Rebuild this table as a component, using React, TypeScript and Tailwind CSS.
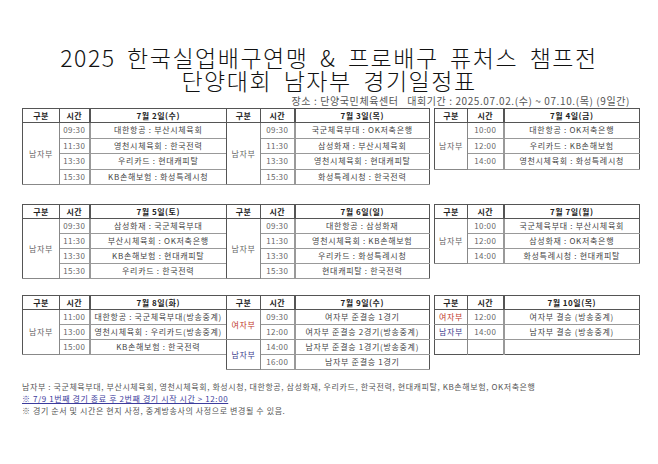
type Row = { time: string; match: string }
type Group = { label: string; tone?: "red" | "blue"; rows: Row[] }
type Day = { date: string; groups: Group[]; blank?: number }

const COLS_A = [37, 30, 137]
const COLS_B = [34, 34, 135]
const COLS_C = [33, 36, 136]

const days: Day[][] = [
  [
    {
      date: "7월 2일(수)",
      groups: [
        {
          label: "남자부",
          rows: [
            { time: "09:30", match: "대한항공 : 부산시체육회" },
            { time: "11:30", match: "영천시체육회 : 한국전력" },
            { time: "13:30", match: "우리카드 : 현대캐피탈" },
            { time: "15:30", match: "KB손해보험 : 화성특례시청" },
          ],
        },
      ],
    },
    {
      date: "7월 3일(목)",
      groups: [
        {
          label: "남자부",
          rows: [
            { time: "09:30", match: "국군체육부대 : OK저축은행" },
            { time: "11:30", match: "삼성화재 : 부산시체육회" },
            { time: "13:30", match: "영천시체육회 : 현대캐피탈" },
            { time: "15:30", match: "화성특례시청 : 한국전력" },
          ],
        },
      ],
    },
    {
      date: "7월 4일(금)",
      groups: [
        {
          label: "남자부",
          rows: [
            { time: "10:00", match: "대한항공 : OK저축은행" },
            { time: "12:00", match: "우리카드 : KB손해보험" },
            { time: "14:00", match: "영천시체육회 : 화성특례시청" },
          ],
        },
      ],
    },
  ],
  [
    {
      date: "7월 5일(토)",
      groups: [
        {
          label: "남자부",
          rows: [
            { time: "09:30", match: "삼성화재 : 국군체육부대" },
            { time: "11:30", match: "부산시체육회 : OK저축은행" },
            { time: "13:30", match: "KB손해보험 : 현대캐피탈" },
            { time: "15:30", match: "우리카드 : 한국전력" },
          ],
        },
      ],
    },
    {
      date: "7월 6일(일)",
      groups: [
        {
          label: "남자부",
          rows: [
            { time: "09:30", match: "대한항공 : 삼성화재" },
            { time: "11:30", match: "영천시체육회 : KB손해보험" },
            { time: "13:30", match: "우리카드 : 화성특례시청" },
            { time: "15:30", match: "현대캐피탈 : 한국전력" },
          ],
        },
      ],
    },
    {
      date: "7월 7일(월)",
      groups: [
        {
          label: "남자부",
          rows: [
            { time: "10:00", match: "국군체육부대 : 부산시체육회" },
            { time: "12:00", match: "삼성화재 : OK저축은행" },
            { time: "14:00", match: "화성특례시청 : 현대캐피탈" },
          ],
        },
      ],
    },
  ],
  [
    {
      date: "7월 8일(화)",
      groups: [
        {
          label: "남자부",
          rows: [
            { time: "11:00", match: "대한항공 : 국군체육부대(방송중계)" },
            { time: "13:00", match: "영천시체육회 : 우리카드(방송중계)" },
            { time: "15:00", match: "KB손해보험 : 한국전력" },
          ],
        },
      ],
    },
    {
      date: "7월 9일(수)",
      groups: [
        {
          label: "여자부",
          tone: "red",
          rows: [
            { time: "09:30", match: "여자부 준결승 1경기" },
            { time: "12:00", match: "여자부 준결승 2경기(방송중계)" },
          ],
        },
        {
          label: "남자부",
          tone: "blue",
          rows: [
            { time: "14:00", match: "남자부 준결승 1경기(방송중계)" },
            { time: "16:00", match: "남자부 준결승 1경기" },
          ],
        },
      ],
    },
    {
      date: "7월 10일(목)",
      groups: [
        { label: "여자부", tone: "red", rows: [{ time: "12:00", match: "여자부 결승 (방송중계)" }] },
        { label: "남자부", tone: "blue", rows: [{ time: "14:00", match: "남자부 결승 (방송중계)" }] },
      ],
      blank: 1,
    },
  ],
]

const toneClass = (tone?: "red" | "blue") =>
  tone === "red" ? "text-[#c0392b]" : tone === "blue" ? "text-[#3c3c8c]" : "text-[#666]"

function DayTable({
  day,
  cols,
  rowH,
  className = "",
}: {
  day: Day
  cols: number[]
  rowH: string
  className?: string
}) {
  return (
    <table className={`table-fixed border-collapse border border-[#555] ${className}`}>
      <colgroup>
        {cols.map((w, i) => (
          <col key={i} style={{ width: w }} />
        ))}
      </colgroup>
      <thead>
        <tr className="h-[14px] text-[8px] text-[#222]">
          <th className="border-r border-b border-[#555] font-bold leading-none tracking-[0.5px]">구분</th>
          <th className="border-r-2 border-b border-[#555] font-bold leading-none tracking-[0.5px]">시간</th>
          <th className="border-b border-[#555] font-bold leading-none tracking-[0.5px]">{day.date}</th>
        </tr>
      </thead>
      <tbody>
        {day.groups.map((g) =>
          g.rows.map((r, i) => (
            <tr key={g.label + r.time} className={`${rowH} text-[8px] leading-none`}>
              {i === 0 && (
                <td
                  rowSpan={g.rows.length}
                  className={`border-r border-b border-[#888] text-center tracking-[0.6px] ${toneClass(g.tone)}`}
                >
                  {g.label}
                </td>
              )}
              <td className="border-r-2 border-b border-[#999] text-center text-[#666] tracking-[0.4px]">{r.time}</td>
              <td className="border-b border-[#999] text-center text-[#444] tracking-[0.7px]">{r.match}</td>
            </tr>
          ))
        )}
        {Array.from({ length: day.blank ?? 0 }).map((_, i) => (
          <tr key={"b" + i} className={rowH}>
            <td className="border-r border-[#888]" />
            <td className="border-r-2 border-[#999]" />
            <td />
          </tr>
        ))}
      </tbody>
    </table>
  )
}

export default function App() {
  return (
    <div className="w-[658px] h-[464px] bg-white font-['Noto_Sans_CJK_KR',sans-serif] text-[#222] overflow-hidden">
      <div className="pt-[46px] text-center text-[23px] leading-[23px] font-light tracking-[1.5px] [word-spacing:5px] text-[#111]">
        <div>2025 한국실업배구연맹 &amp; 프로배구 퓨처스 챔프전</div>
        <div>단양대회 남자부 경기일정표</div>
      </div>
      <div className="mt-[3px] pr-[28px] text-right text-[10px] leading-[11px] tracking-[0.6px] text-[#555] whitespace-pre">
        장소 : 단양국민체육센터   대회기간 : 2025.07.02.(수) ~ 07.10.(목) (9일간)
      </div>

      <div className="mt-[2px] pl-[22px] flex flex-col">
        {days.map((row, ri) => {
          const rowH = ri === 0 ? "h-[15.5px]" : "h-[15px]"
          return (
            <div key={ri} className={`flex items-start ${ri === 1 ? "mt-[19px]" : ri === 2 ? "mt-[16px]" : ""}`}>
              <DayTable day={row[0]} cols={COLS_A} rowH={rowH} />
              <DayTable day={row[1]} cols={COLS_B} rowH={rowH} className="-ml-px" />
              <DayTable day={row[2]} cols={COLS_C} rowH={rowH} className="ml-[4px]" />
            </div>
          )
        })}
      </div>

      <div className="mt-[11px] pl-[22px] text-[8px] leading-[12px] text-[#555] tracking-[0.6px]">
        <div>
          남자부 : 국군체육부대, 부산시체육회, 영천시체육회, 화성시청, 대한항공, 삼성화재, 우리카드, 한국전력,
          현대캐피탈, KB손해보험, OK저축은행
        </div>
        <div className="text-[#3c3c9c] underline">※ 7/9 1번째 경기 종료 후 2번째 경기 시작 시간 &gt; 12:00</div>
        <div>※ 경기 순서 및 시간은 현지 사정, 중계방송사의 사정으로 변경될 수 있음.</div>
      </div>
    </div>
  )
}
